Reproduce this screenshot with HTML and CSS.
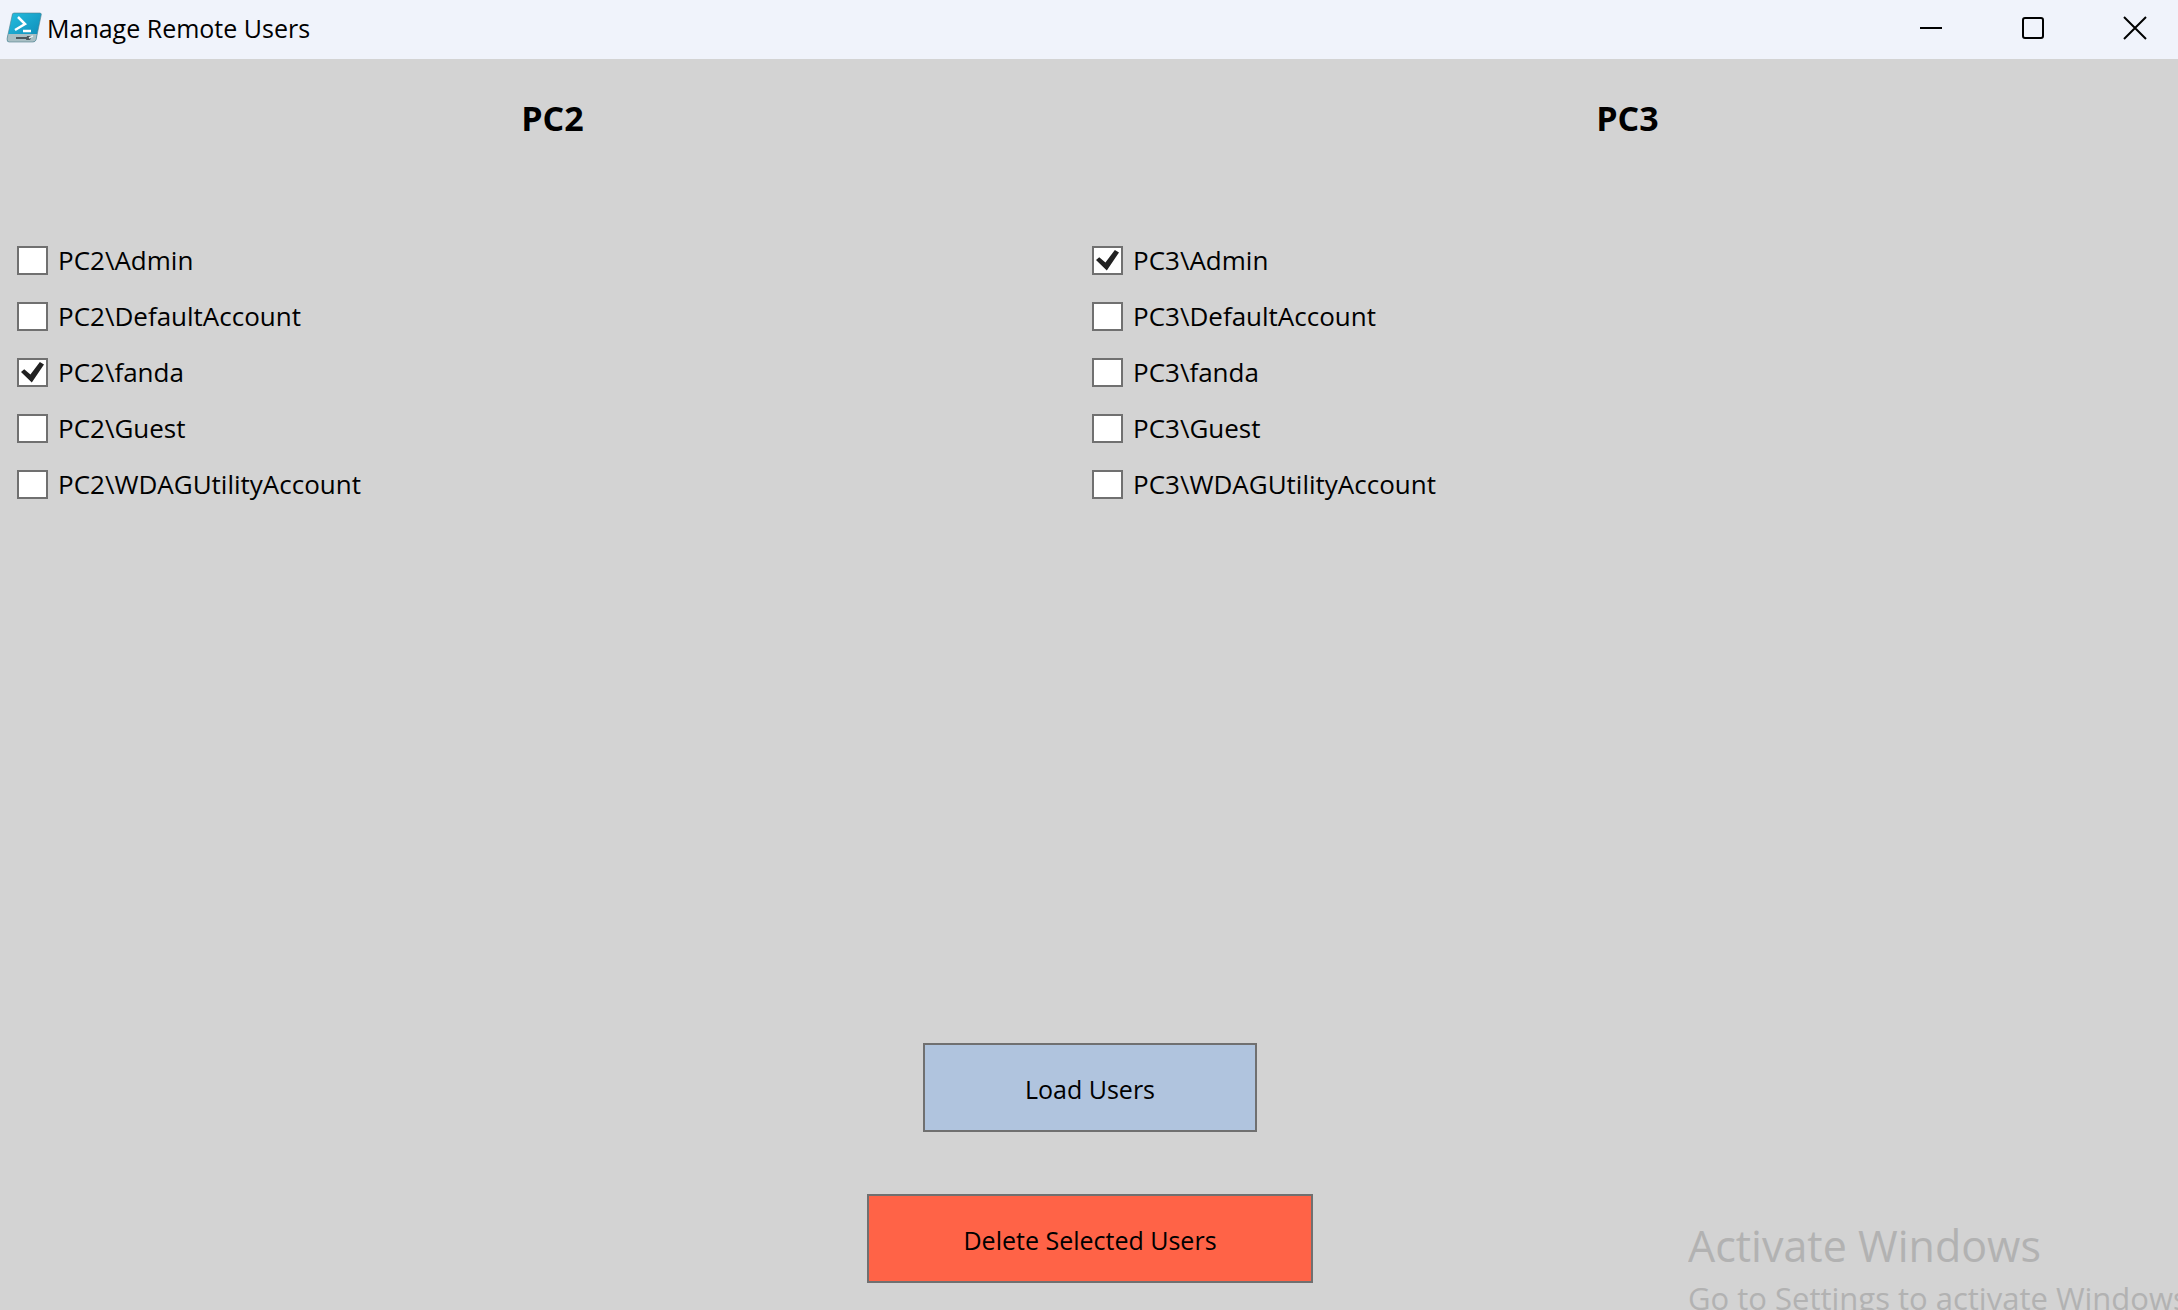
FILE: index.html
```html
<!DOCTYPE html>
<html lang="en">
<head>
<meta charset="utf-8">
<title>Manage Remote Users</title>
<link rel="stylesheet" href="styles.css">
</head>
<body>
<header class="titlebar">
  <svg class="app-icon" viewBox="0 0 36 32" aria-hidden="true">
    <defs><linearGradient id="tile" x1="0" y1="0" x2="1" y2="1"><stop offset="0" stop-color="#25bfe0"/><stop offset="1" stop-color="#0d86b4"/></linearGradient></defs>
    <path d="M8 1H34Q36 1 35 4L30 28Q29 30 27 30H3Q1 30 1 27L6 4Q6 1 8 1Z" fill="url(#tile)"/>
    <path d="M2 22H31L30 28Q29 30 27 30H3Q1 30 1 27Z" fill="#a9bfc4"/>
    <path d="M8 1H34Q36 1 35 4L30 28Q29 30 27 30H3Q1 30 1 27L6 4Q6 1 8 1Z" fill="none" stroke="#527f8c" stroke-opacity=".6"/>
    <path d="M12 5L19 12L9 18M17 19H25" fill="none" stroke="#fff" stroke-width="2.5"/>
    <path d="M10 26H22" stroke="#4b565b" stroke-width="2"/>
    <path d="M21 24L26 24L24 28H20Z" fill="#4b565b"/>
    <path d="M23 26L27 24" stroke="#e6eef0" stroke-width="1.5"/>
  </svg>
  <h1 class="window-title">Manage Remote Users</h1>
  <div class="window-controls">
    <button class="window-button" type="button" aria-label="Minimize"><svg viewBox="0 0 24 24"><path d="M1 12H23"/></svg></button>
    <button class="window-button" type="button" aria-label="Maximize"><svg viewBox="0 0 24 24"><rect x="2" y="2" width="20" height="20" rx="2"/></svg></button>
    <button class="window-button" type="button" aria-label="Close"><svg viewBox="0 0 24 24"><path d="M1 1L23 23M23 1L1 23"/></svg></button>
  </div>
</header>
<main class="content">
  <div class="computers">
    <section class="computer">
      <h2 class="computer-name">PC2</h2>
      <div class="users">
        <label class="user"><input class="tick" type="checkbox">PC2\Admin</label>
        <label class="user"><input class="tick" type="checkbox">PC2\DefaultAccount</label>
        <label class="user"><input class="tick" type="checkbox" checked>PC2\fanda</label>
        <label class="user"><input class="tick" type="checkbox">PC2\Guest</label>
        <label class="user"><input class="tick" type="checkbox">PC2\WDAGUtilityAccount</label>
      </div>
    </section>
    <section class="computer">
      <h2 class="computer-name">PC3</h2>
      <div class="users">
        <label class="user"><input class="tick" type="checkbox" checked>PC3\Admin</label>
        <label class="user"><input class="tick" type="checkbox">PC3\DefaultAccount</label>
        <label class="user"><input class="tick" type="checkbox">PC3\fanda</label>
        <label class="user"><input class="tick" type="checkbox">PC3\Guest</label>
        <label class="user"><input class="tick" type="checkbox">PC3\WDAGUtilityAccount</label>
      </div>
    </section>
  </div>
  <div class="actions">
    <button class="action load" type="button">Load Users</button>
    <button class="action delete" type="button">Delete Selected Users</button>
  </div>
</main>
<aside class="watermark">
  <p class="watermark-title">Activate Windows</p>
  <p class="watermark-text">Go to Settings to activate Windows</p>
</aside>
</body>
</html>
```
FILE: styles.css
```css
* { box-sizing: border-box; }
body {
  margin: 0;
  height: 100vh;
  display: flex;
  flex-direction: column;
  overflow: hidden;
  background: #d3d3d3;
  color: #000;
  font-family: "Open Sans", "Noto Sans", sans-serif;
  font-size: 26px;
}
h1, h2, p { margin: 0; }
.titlebar {
  display: flex;
  align-items: center;
  height: 59px;
  padding: 0 0 4px 6px;
  gap: 5px;
  background: #f0f3fb;
}
.app-icon { width: 36px; height: 32px; }
.window-title { flex: 1; font-size: 25px; line-height: 32px; font-weight: 400; }
.window-controls { display: flex; gap: 16px; align-self: stretch; }
.window-button {
  width: 86px;
  padding: 0;
  border: 0;
  background: transparent;
  display: grid;
  place-items: center;
}
.window-button svg { width: 24px; height: 24px; fill: none; stroke: #000; stroke-width: 2; }
.content {
  flex: 1;
  display: flex;
  flex-direction: column;
  justify-content: space-between;
  padding: 31px 13px 27px 15px;
}
.computers { display: grid; grid-template-columns: 1fr 1fr; }
.computer-name { font-size: 34px; line-height: 56px; font-weight: 700; text-align: center; }
.users { display: flex; flex-direction: column; align-items: flex-start; padding: 86px 0 0 2px; }
.user { display: flex; align-items: center; gap: 10px; height: 56px; }
.tick {
  appearance: none;
  display: grid;
  place-items: center;
  width: 31px;
  height: 29px;
  margin: 0;
  border: 2px solid #707070;
  background: #fff;
}
.tick:checked::before {
  content: "";
  width: 23px;
  height: 21px;
  background: #212121;
  clip-path: polygon(0 50%, 14% 37%, 41% 62%, 82% 2%, 100% 14%, 47% 100%);
}
.actions { display: flex; flex-direction: column; align-items: center; gap: 62px; }
.action {
  height: 89px;
  padding: 2px 0 0;
  border: 2px solid #707070;
  color: #000;
  font: inherit;
  font-size: 25px;
}
.load { width: 334px; background: #b0c4de; }
.delete { width: 446px; background: #ff6347; }
.watermark {
  position: absolute;
  right: 0;
  bottom: 0;
  width: 490px;
  height: 96px;
  overflow: hidden;
  white-space: nowrap;
  color: #b2b2b2;
}
.watermark-title { font-size: 43px; line-height: 64px; }
.watermark-text { font-size: 31px; line-height: 40px; }
```
